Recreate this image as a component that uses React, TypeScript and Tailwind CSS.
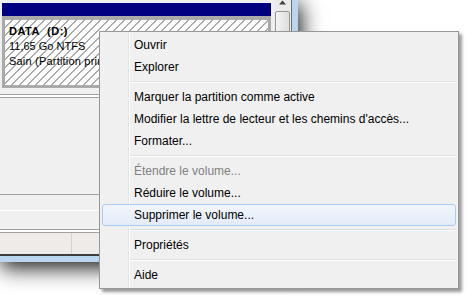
import React from "react";

type Item = { label: string; disabled?: boolean; hot?: boolean } | "sep";

const items: Item[] = [
  { label: "Ouvrir" },
  { label: "Explorer" },
  "sep",
  { label: "Marquer la partition comme active" },
  { label: "Modifier la lettre de lecteur et les chemins d'accès..." },
  { label: "Formater..." },
  "sep",
  { label: "Étendre le volume...", disabled: true },
  { label: "Réduire le volume..." },
  { label: "Supprimer le volume...", hot: true },
  "sep",
  { label: "Propriétés" },
  "sep",
  { label: "Aide" },
];

function Menu() {
  return (
    <div className="absolute left-[99px] top-[31px] z-10 flex h-[258px] w-[360px] flex-col border border-[#979797] bg-[#f0f0f0] bg-[linear-gradient(to_right,#f0f0f0_28px,#e2e3e3_28px,#e2e3e3_29px,#ffffff_29px,#ffffff_30px,#f0f0f0_30px)] p-[2px] text-[12px] shadow-[3px_3px_3px_rgba(0,0,0,0.4)]">
      {items.map((it, i) =>
        it === "sep" ? (
          <div key={i} className="flex h-[8px] flex-col pl-[28px] pt-[3px]">
            <div className="h-px bg-[#e0e0e0]" />
            <div className="h-px bg-white" />
          </div>
        ) : (
          <div
            key={i}
            className={
              it.hot
                ? "flex h-[22px] items-center rounded-[3px] border border-[#a9cdf2] bg-[linear-gradient(#f2f6fc,#e3ebf8)] pl-[31px] text-black"
                : it.disabled
                ? "flex h-[22px] items-center border border-transparent pl-[31px] text-[#808080]"
                : "flex h-[22px] items-center border border-transparent pl-[31px] text-black"
            }
          >
            {it.label}
          </div>
        )
      )}
    </div>
  );
}

export default function App() {
  return (
    <div className="relative h-[295px] w-[466px] overflow-hidden bg-white font-['Liberation_Sans',Arial,sans-serif] text-[11px] text-black">
      {/* Window */}
      <div className="flex h-[262px] w-[298px] flex-col bg-[#b9d5f0] pb-[6px] pr-[6px] shadow-[2px_5px_20px_1px_rgba(0,0,0,0.9)]">
        <div className="flex flex-1 flex-col border-b-2 border-r border-b-[#3d3d3d] border-r-[#6d6d6d] bg-[#f0f0f0]">
          {/* Graphical pane */}
          <div className="flex h-[229px] flex-row">
            <div className="flex w-[274px] flex-col">
              <div className="h-[3px]" />
              <div className="ml-[2px] flex w-[269px] flex-col">
                <div className="h-[13px] bg-[#000080]" />
                <div className="bg-[#a9a9a9] px-[3px] pb-[3px] pt-[4px]">
                  <div className="h-[65px] bg-[repeating-linear-gradient(135deg,#ffffff_0px,#ffffff_4.6px,#ababab_4.6px,#ababab_5.66px)] pl-[4px] pt-[4px] leading-[15px] whitespace-nowrap">
                    <div className="font-bold tracking-[0.5px]">DATA&nbsp; (D:)</div>
                    <div>11,65 Go NTFS</div>
                    <div className="tracking-[0.2px]">Sain (Partition principale)</div>
                  </div>
                </div>
              </div>
              <div className="h-[6px]" />
              <div className="h-px bg-[#a0a0a0]" />
              <div className="h-[2px] bg-white" />
              <div className="h-px bg-[#a0a0a0]" />
              <div className="h-[96px]" />
              <div className="h-px bg-[#a0a0a0]" />
              <div className="h-[15px]" />
              <div className="h-px bg-white" />
              <div className="flex-1" />
            </div>
            {/* Scrollbar */}
            <div className="flex w-[17px] flex-col items-center bg-[#ebebeb]">
              <svg width="7" height="5" viewBox="0 0 7 5" className="block">
                <polygon points="3.5,0.5 7,4.5 0,4.5" fill="#404040" />
              </svg>
              <div className="mt-[6px] h-[80px] w-[15px] rounded-[2px] border border-[#979797] bg-[linear-gradient(to_right,#f4f4f4,#dedede)]" />
            </div>
          </div>
          <div className="h-px bg-[#a0a0a0]" />
          <div className="h-[2px] bg-white" />
          <div className="h-px bg-[#a0a0a0]" />
          {/* Status bar */}
          <div className="flex flex-1 flex-row bg-[#eeebe9]">
            <div className="w-[72px] border-r border-[#d6d1cc]" />
            <div className="flex-1" />
          </div>
        </div>
      </div>
      <Menu />
    </div>
  );
}
